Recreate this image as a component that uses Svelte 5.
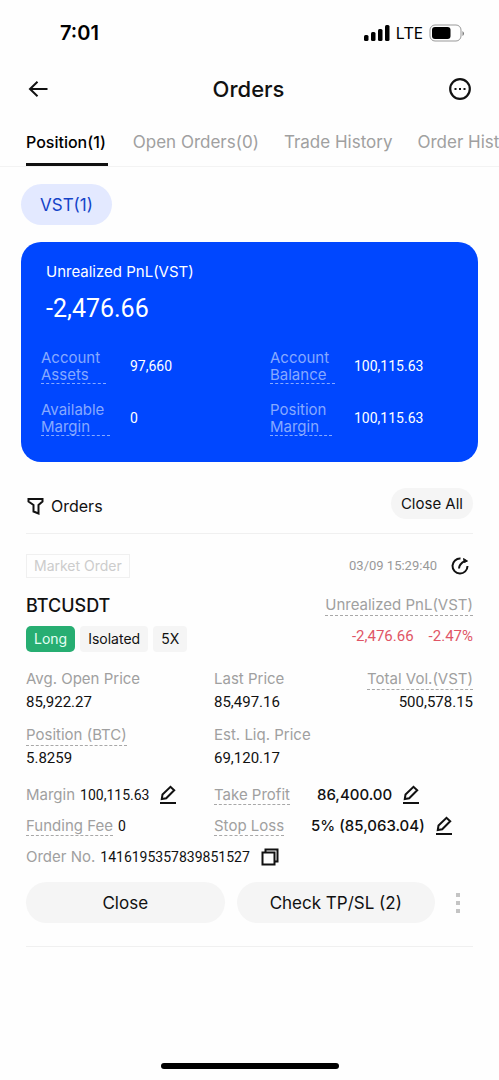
<script>
  const tabs = ["Position(1)", "Open Orders(0)", "Trade History", "Order History"]
  let active = $state(0)

  const account = [
    { label: "Account Assets", value: "97,660" },
    { label: "Account Balance", value: "100,115.63" },
    { label: "Available Margin", value: "0" },
    { label: "Position Margin", value: "100,115.63" },
  ]

  const prices = [
    { label: "Avg. Open Price", value: "85,922.27" },
    { label: "Last Price", value: "85,497.16" },
    { label: "Total Vol.(VST)", value: "500,578.15", hint: true },
    { label: "Position (BTC)", value: "5.8259", hint: true },
    { label: "Est. Liq. Price", value: "69,120.17" },
  ]
</script>

{#snippet pencil(label)}
  <button class="icon" aria-label={label}>
    <svg width="16" height="20" viewBox="0 0 16 20" fill="none" stroke="#111" stroke-width="2">
      <path d="M1.800 14L2.500 9.500 10.500 1.800l3.700 3.400L6.200 13.200Z" />
      <path d="M0 18h16" />
    </svg>
  </button>
{/snippet}

<div class="app">
  <div class="status">
    <span class="time">7:01</span>
    <span class="signal">
      <svg width="26" height="18" viewBox="0 0 26 18">
        <rect x="0" y="11" width="4.500" height="6" rx="1.500" />
        <rect x="7" y="8" width="4.500" height="9" rx="1.500" />
        <rect x="14" y="5" width="4.500" height="12" rx="1.500" />
        <rect x="21" y="1" width="4.500" height="16" rx="1.500" />
      </svg>
      <span>LTE</span>
      <svg width="36" height="18" viewBox="0 0 36 18">
        <rect x="1" y="1" width="31" height="16" rx="5" fill="none" stroke="#999" />
        <rect x="3" y="3" width="18.500" height="12" rx="3" />
        <path d="M33.500 7v5q1.500-1 1.500-2.500T33.500 7Z" fill="#777" />
      </svg>
    </span>
  </div>

  <header>
    <button class="icon" aria-label="Back">
      <svg width="20" height="16" viewBox="0 0 20 16" fill="none" stroke="#111" stroke-width="2">
        <path d="M19.500 8H2M9.500 .800L2 8l7.500 7.200" />
      </svg>
    </button>
    <h1>Orders</h1>
    <button class="icon" aria-label="More">
      <svg width="22" height="22" viewBox="0 0 22 22">
        <circle cx="11" cy="11" r="9.800" fill="none" stroke="#111" stroke-width="2.200" />
        <path d="M5.500 10h2v2h-2zM10 10h2v2h-2zM14.500 10h2v2h-2z" fill="#111" />
      </svg>
    </button>
  </header>

  <nav>
    {#each tabs as tab, i}
      <button class:active={active === i} onclick={() => (active = i)}>{tab}</button>
    {/each}
  </nav>

  <main>
    <button class="coin">VST(1)</button>

    <section class="card">
      <h2>Unrealized PnL(VST)</h2>
      <p class="total">-2,476.66</p>
      <div class="account">
        {#each account as item}
          <span class="name">{item.label}</span>
          <span class="num small">{item.value}</span>
        {/each}
      </div>
    </section>

    <section class="orders">
      <div class="toolbar">
        <button class="filter">
          <svg width="18" height="18" viewBox="0 0 18 18" fill="none" stroke="#111" stroke-width="2">
            <path d="M2.500 2h14v2.500L12.500 8v8.500l-5-2V8L2.500 4.500Z" />
          </svg>
          Orders
        </button>
        <button class="close-all">Close All</button>
      </div>

      <article>
        <div class="row meta">
          <span class="type">Market Order</span>
          <span class="date">03/09 15:29:40</span>
          <button class="icon" aria-label="Share">
            <svg width="18" height="18" viewBox="0 0 18 18" fill="none" stroke="#111" stroke-width="2">
              <path d="M9.500 1.500A7.500 7.500 0 1 0 16.500 9" />
              <path d="M8 11.500Q8 7 14 3.800" />
              <path d="M12.500 1.500l4 2.500-3 1.500Z" fill="#111" stroke-width="1" />
            </svg>
          </button>
        </div>

        <div class="row pair">
          <h3>BTCUSDT</h3>
          <span class="label hint">Unrealized PnL(VST)</span>
        </div>

        <div class="row badges">
          <span class="badge long">Long</span>
          <span class="badge">Isolated</span>
          <span class="badge">5X</span>
          <span class="loss">-2,476.66</span>
          <span class="loss">-2.47%</span>
        </div>

        <div class="prices">
          {#each prices as item}
            <div class="price">
              <span class="label" class:hint={item.hint}>{item.label}</span>
              <span class="num">{item.value}</span>
            </div>
          {/each}
        </div>

        <div class="limits">
          <div class="line">
            <span class="label">Margin</span>
            <span class="num small">100,115.63</span>
            {@render pencil("Edit margin")}
          </div>
          <div class="line">
            <span class="label hint">Take Profit</span>
            <span class="target">86,400.00</span>
            {@render pencil("Edit take profit")}
          </div>
          <div class="line">
            <span class="label hint">Funding Fee</span>
            <span class="num small">0</span>
          </div>
          <div class="line">
            <span class="label hint">Stop Loss</span>
            <span class="target">5% (85,063.04)</span>
            {@render pencil("Edit stop loss")}
          </div>
          <div class="line wide">
            <span class="label">Order No.</span>
            <span class="num small">1416195357839851527</span>
            <button class="icon" aria-label="Copy order number">
              <svg width="18" height="18" viewBox="0 0 18 18" fill="none" stroke="#111" stroke-width="2">
                <path d="M1.500 4.500h12v12h-12zM4.500 4.500V1.500h12v12h-3" />
              </svg>
            </button>
          </div>
        </div>

        <div class="actions">
          <button class="action">Close</button>
          <button class="action">Check TP/SL (2)</button>
          <button class="icon more" aria-label="More actions">
            <svg width="4" height="20" viewBox="0 0 4 20" fill="#c4c4c4">
              <path d="M0 0h4v4H0zM0 8h4v4H0zM0 16h4v4H0z" />
            </svg>
          </button>
        </div>
      </article>
    </section>
  </main>

  <div class="home"></div>
</div>

<style>
  :global(body) {
    background: #fefefe;
  }

  .app {
    min-height: 100vh;
    display: flex;
    flex-direction: column;
    overflow: hidden;
    font-family: Inter, "Liberation Sans", sans-serif;
    font-size: 15px;
    line-height: 20px;
    color: #111;
  }

  button {
    border: 0;
    padding: 0;
    background: none;
    font: inherit;
    color: inherit;
    white-space: nowrap;
    cursor: pointer;
  }

  h1,
  h2,
  h3,
  p {
    margin: 0;
    font-weight: 400;
  }

  svg {
    display: block;
  }

  .icon {
    flex: none;
  }

  .status {
    display: flex;
    justify-content: space-between;
    align-items: center;
    height: 66px;
    padding: 0 34px 0 60px;
    color: #000;
  }

  .time {
    font-size: 20px;
    font-weight: 600;
  }

  .signal {
    display: flex;
    align-items: center;
    gap: 6px;
    font-family: "Noto Sans", sans-serif;
    font-size: 17px;
  }

  header {
    display: flex;
    align-items: center;
    justify-content: space-between;
    height: 46px;
    padding: 0 28px;
  }

  h1 {
    font-size: 22px;
    font-weight: 500;
  }

  nav {
    display: flex;
    gap: 25px;
    height: 54px;
    padding: 0 26px;
    border-bottom: 1px solid #f3f3f3;
    font-size: 17px;
    color: #a0a0a0;
    overflow-x: auto;
    scrollbar-width: none;
  }

  nav button {
    flex: none;
    padding-top: 8px;
    border-bottom: 3px solid transparent;
  }

  nav .active {
    padding-right: 2px;
    border-color: #111;
    font-size: 16px;
    font-weight: 500;
    color: #000;
  }

  main {
    flex: 1;
    padding: 17px 21px 0;
  }

  .coin {
    height: 41px;
    padding: 0 19px;
    border-radius: 21px;
    background: #e3e9ff;
    font-size: 17px;
    color: #1443c8;
  }

  .card {
    margin-top: 17px;
    padding: 20px 20px 26px;
    border-radius: 20px;
    background: #0047ff;
    color: #fff;
  }

  h2 {
    padding-left: 5px;
    font-size: 15px;
  }

  .total {
    padding: 12px 0 25px 5px;
    font-family: Roboto, sans-serif;
    font-size: 25px;
    line-height: 30px;
  }

  .account {
    display: grid;
    grid-template-columns: 89px 140fr 84px 104fr;
    row-gap: 17px;
    align-items: center;
    line-height: 17px;
  }

  .name {
    width: min-content;
    padding-right: 6px;
    border-bottom: 1px dashed #86a9ff;
    color: #86a9ff;
  }

  .num {
    font-family: Roboto, sans-serif;
    font-size: 15px;
  }

  .small {
    font-size: 14px;
  }

  .orders {
    padding: 26px 5px 0;
  }

  .toolbar {
    display: flex;
    justify-content: space-between;
    align-items: center;
    padding-bottom: 14px;
    border-bottom: 1px solid #f0f0f0;
  }

  .filter {
    display: flex;
    align-items: center;
    gap: 7px;
    padding-top: 4px;
    font-size: 16px;
  }

  .close-all {
    height: 31px;
    padding: 0 10px;
    border-radius: 16px;
    background: #f5f5f5;
  }

  .row {
    display: flex;
    align-items: center;
  }

  .meta {
    padding-top: 20px;
  }

  .type {
    padding: 1px 7px;
    border: 1px solid #f0f0f0;
    font-size: 14px;
    color: #ccc;
  }

  .date {
    margin: 0 14px 0 auto;
    font-family: Roboto, sans-serif;
    font-size: 13px;
    color: #999;
  }

  .meta .icon {
    margin-right: 4px;
  }

  .pair {
    justify-content: space-between;
    padding-top: 17px;
  }

  h3 {
    font-size: 18px;
    font-weight: 500;
  }

  .label {
    color: #a0a0a0;
  }

  .hint {
    border-bottom: 1px dashed #a8a8a8;
  }

  .badges {
    gap: 5px;
    padding-top: 10px;
  }

  .badge {
    padding: 3px 8px;
    border-radius: 4px;
    background: #f5f5f5;
    font-size: 14px;
  }

  .long {
    border-radius: 5px;
    background: #27ae72;
    color: #e4fff3;
  }

  .loss {
    align-self: flex-start;
    margin-left: 10px;
    font-family: Roboto, sans-serif;
    color: #e05566;
  }

  .badge + .loss {
    margin-left: auto;
  }

  .prices {
    display: grid;
    grid-template-columns: 188fr 120fr 139fr;
    row-gap: 13px;
    padding-top: 17px;
  }

  .price {
    display: flex;
    flex-direction: column;
    align-items: flex-start;
    gap: 3px;
    white-space: nowrap;
  }

  .price .hint {
    margin-bottom: -1px;
  }

  .price:nth-child(3n) {
    align-items: flex-end;
  }

  .limits {
    display: grid;
    grid-template-columns: 188fr 259fr;
    row-gap: 7px;
    padding-top: 15px;
  }

  .line {
    display: flex;
    align-items: center;
    gap: 5px;
    height: 24px;
    line-height: 18px;
    white-space: nowrap;
  }

  .line .icon {
    margin-left: 6px;
  }

  .wide {
    grid-column: 1 / -1;
  }

  .target {
    margin-left: 22px;
    font-weight: 500;
  }

  .actions {
    display: flex;
    align-items: center;
    gap: 12px;
    padding: 13px 13px 23px 0;
    border-bottom: 1px solid #f0f0f0;
  }

  .action {
    flex: 1;
    height: 41px;
    border-radius: 21px;
    background: #f5f5f5;
    font-size: 17px;
  }

  .more {
    margin-left: 9px;
  }

  .home {
    width: 178px;
    height: 6px;
    margin: 0 auto 11px;
    border-radius: 3px;
    background: #000;
  }
</style>
